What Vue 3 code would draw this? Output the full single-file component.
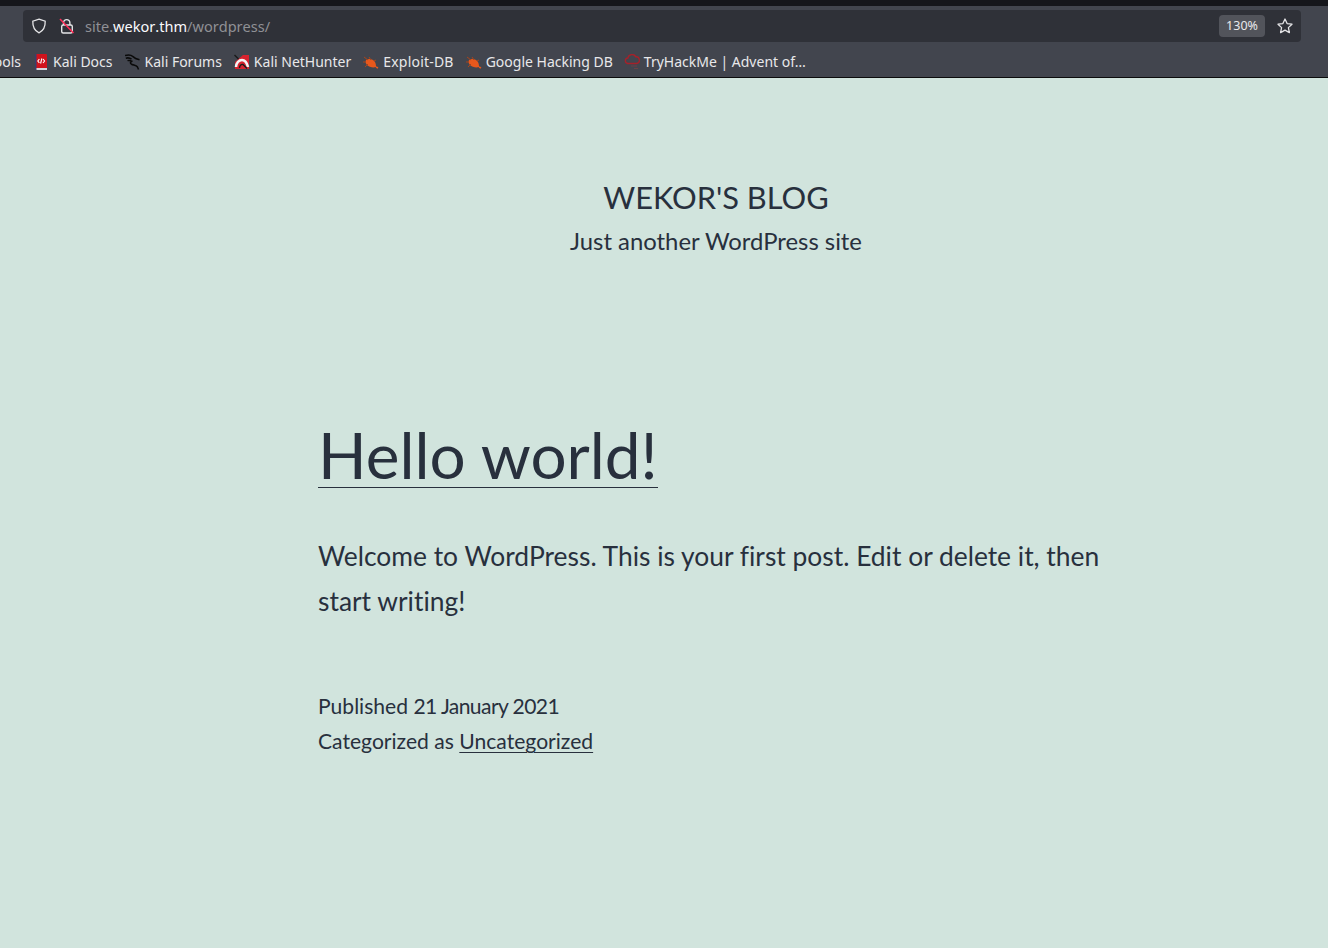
<template>
  <div class="page">
    <header class="chrome">
      <div class="tabstrip"></div>
      <div class="navbar">
        <div class="urlbar">
          <svg class="shield" viewBox="0 0 16 16" width="16" height="16" fill="none" stroke="#e4e4e6" stroke-width="1.3">
            <path d="M8 1.2 14.2 3.2C14.4 8.6 12.6 12.6 8 14.8 3.4 12.6 1.6 8.6 1.8 3.2Z" />
          </svg>
          <svg class="lock" viewBox="0 0 16 16" width="16" height="16" fill="none">
            <path d="M4.5 7V4.8a3.2 3.2 0 0 1 6.4 0V7" stroke="#e4e4e6" stroke-width="1.4" />
            <rect x="2.7" y="7" width="10.6" height="8" rx="1.5" stroke="#e4e4e6" stroke-width="1.4" />
            <path d="M1 1 14.5 15" stroke="#ff2a55" stroke-width="1.5" />
          </svg>
          <div class="url"><span class="dim">site.</span>wekor.thm<span class="dim">/wordpress/</span></div>
          <div class="zoomlevel">130%</div>
          <svg class="star" viewBox="0 0 16 16" width="16" height="16" fill="none" stroke="#e4e4e6" stroke-width="1.3" stroke-linejoin="round">
            <path d="M8 1 10.1 5.6 15 6.2 11.4 9.6 12.4 14.6 8 12.1 3.6 14.6 4.6 9.6 1 6.2 5.9 5.6Z" />
          </svg>
        </div>
      </div>
      <nav class="bookmarks">
        <span class="clipped">Tools</span>
        <a v-for="b in bookmarks" :key="b.label" class="bookmark" :class="b.cls">
          <svg viewBox="0 0 16 16" width="16" height="16" v-html="b.icon"></svg>
          <span>{{ b.label }}</span>
        </a>
      </nav>
    </header>

    <main class="site">
      <div class="branding">
        <h1>WEKOR'S BLOG</h1>
        <p>Just another WordPress site</p>
      </div>
      <article class="post">
        <h2><a>Hello world!</a></h2>
        <p class="content">Welcome to WordPress. This is your first post. Edit or delete it, then start writing!</p>
        <footer class="meta">
          <div>Published <span class="date">21 January 2021</span></div>
          <div>Categorized as <a>Uncategorized</a></div>
        </footer>
      </article>
    </main>
  </div>
</template>

<script setup>
const bug = '<path d="M3 6c3-2 7-1 9 2 1 2 1 4 1 5-3 1-7 0-9-2-1-1-2-3-1-5Z" fill="#e8581c"/><path d="M1 3l4 3M6 3l2 3M0 8l3 0M2 13l3-3M13 6l-2 1" stroke="#a8441a" stroke-width="1"/><path d="M13 13l2 1" stroke="#e8581c" stroke-width="1.5"/>'

const bookmarks = [
  {
    label: 'Kali Docs',
    cls: 'docs',
    icon: '<rect x="2" y="0" width="12" height="15" rx="1" fill="#d0131c"/><rect x="2" y="0" width="1.5" height="16" fill="#37406e"/><rect x="3.5" y="14" width="10.5" height="2" fill="#d4d6dc"/><path d="M6.4 5 4.8 7 6.4 9M10 5l1.6 2L10 9M8.8 4.5 7.6 9.5" stroke="#fff" stroke-width="1.1" fill="none"/>'
  },
  {
    label: 'Kali Forums',
    cls: 'forums',
    icon: '<path d="M0 1.6c3-1 6-.8 8 1 2 2 3.5 2.4 6.5 3.2M.8 4.2c2-.6 4-.4 5.7 1M2.5 6.6c1.5-.4 3-.2 4 .6M7.5 7c-2.4.6-2.6 2.4-1 3.2 2.2 1 5 1.2 6 2.8l1 2.5" stroke="#0a0a0a" stroke-width="1.5" fill="none"/>'
  },
  {
    label: 'Kali NetHunter',
    cls: 'hunter',
    icon: '<path d="M1 8 9 1h6v14H1Z" fill="#d8222e"/><path d="M2 13c0-4 3-7 6-7s5 3 6 7" stroke="#f4f4f4" stroke-width="2.6" fill="none"/><path d="M5.5 14c0-2 1.5-4 3.5-3.5l4 4M.5 1l4 4" stroke="#1a1a1a" stroke-width="1.4" fill="none"/>'
  },
  { label: 'Exploit-DB', cls: 'edb', icon: bug },
  { label: 'Google Hacking DB', cls: 'ghdb', icon: bug },
  {
    label: 'TryHackMe | Advent of…',
    cls: 'thm',
    icon: '<path d="M3.5 9.5a2.8 2.8 0 0 1 .3-5.5 4.3 4.3 0 0 1 8-1.2 3.4 3.4 0 0 1 1 6.7Z" stroke="#a5212a" stroke-width="1.4" fill="none"/><path d="M7 12h6M10 14.5h4" stroke="#6b4146" stroke-width="1"/>'
  }
]
</script>

<style>
html, body { margin: 0; background: #d1e4dd; }
</style>

<style scoped>
.page {
  min-height: 948px;
  background: #d1e4dd;
  color: #28303d;
  font-family: "Lato", "Noto Sans", sans-serif;
  font-variant-ligatures: none;
  overflow: hidden;
}
.chrome { background: #42454e; border-bottom: 1px solid #0c0c0d; font-family: "Noto Sans", sans-serif; }
.tabstrip { height: 6px; background: #15161b; }
.navbar { padding: 4px 27px 4px 23px; }
.urlbar {
  height: 32px;
  background: #2f3138;
  border-radius: 4px;
  display: flex;
  align-items: center;
  color: #fbfbfe;
  font-size: 14.56px;
  padding: 0 8px;
}
.lock { margin-left: 12px; }
.url { margin-left: 10px; flex: 1; font-kerning: none; }
.dim { color: #8f9095; }
.zoomlevel {
  background: #52545b;
  border-radius: 4px;
  font-size: 12.5px;
  height: 22px;
  line-height: 22px;
  width: 46px;
  text-align: center;
  color: #e8e8ea;
}
.star { margin-left: 12px; }
.bookmarks {
  height: 31px;
  display: flex;
  align-items: center;
  font-size: 14px;
  color: #e8e8ea;
  margin-left: -13px;
  white-space: nowrap;
  gap: 12px;
}
.clipped { width: 34px; }
.bookmark { display: flex; align-items: center; gap: 4px; }
.edb span { letter-spacing: 0.2px; }
.thm { margin-left: -1px; }
.site { display: flex; flex-direction: column; }
.branding { text-align: center; margin-top: 100px; padding-left: 104px; }
.branding h1 { margin: 0; font-size: 30.8px; font-weight: 400; line-height: 40px; }
.branding p { margin: 3px 0 0; font-size: 23.85px; line-height: 40px; }
.post { margin: 0 0 0 318px; width: 800px; padding-top: 162px; }
.post h2 { margin: 0; font-size: 63.8px; font-weight: 400; line-height: 64px; }
.post h2 a { border-bottom: 1px solid #28303d; display: inline-block; }
.content { margin: 46px 0 0; font-size: 26.4px; line-height: 45px; }
.meta { margin-top: 64px; font-size: 21.1px; line-height: 35px; }
.date { letter-spacing: -0.6px; }
.meta a { text-decoration: underline; text-underline-offset: 3px; text-decoration-thickness: 1px; }
</style>
